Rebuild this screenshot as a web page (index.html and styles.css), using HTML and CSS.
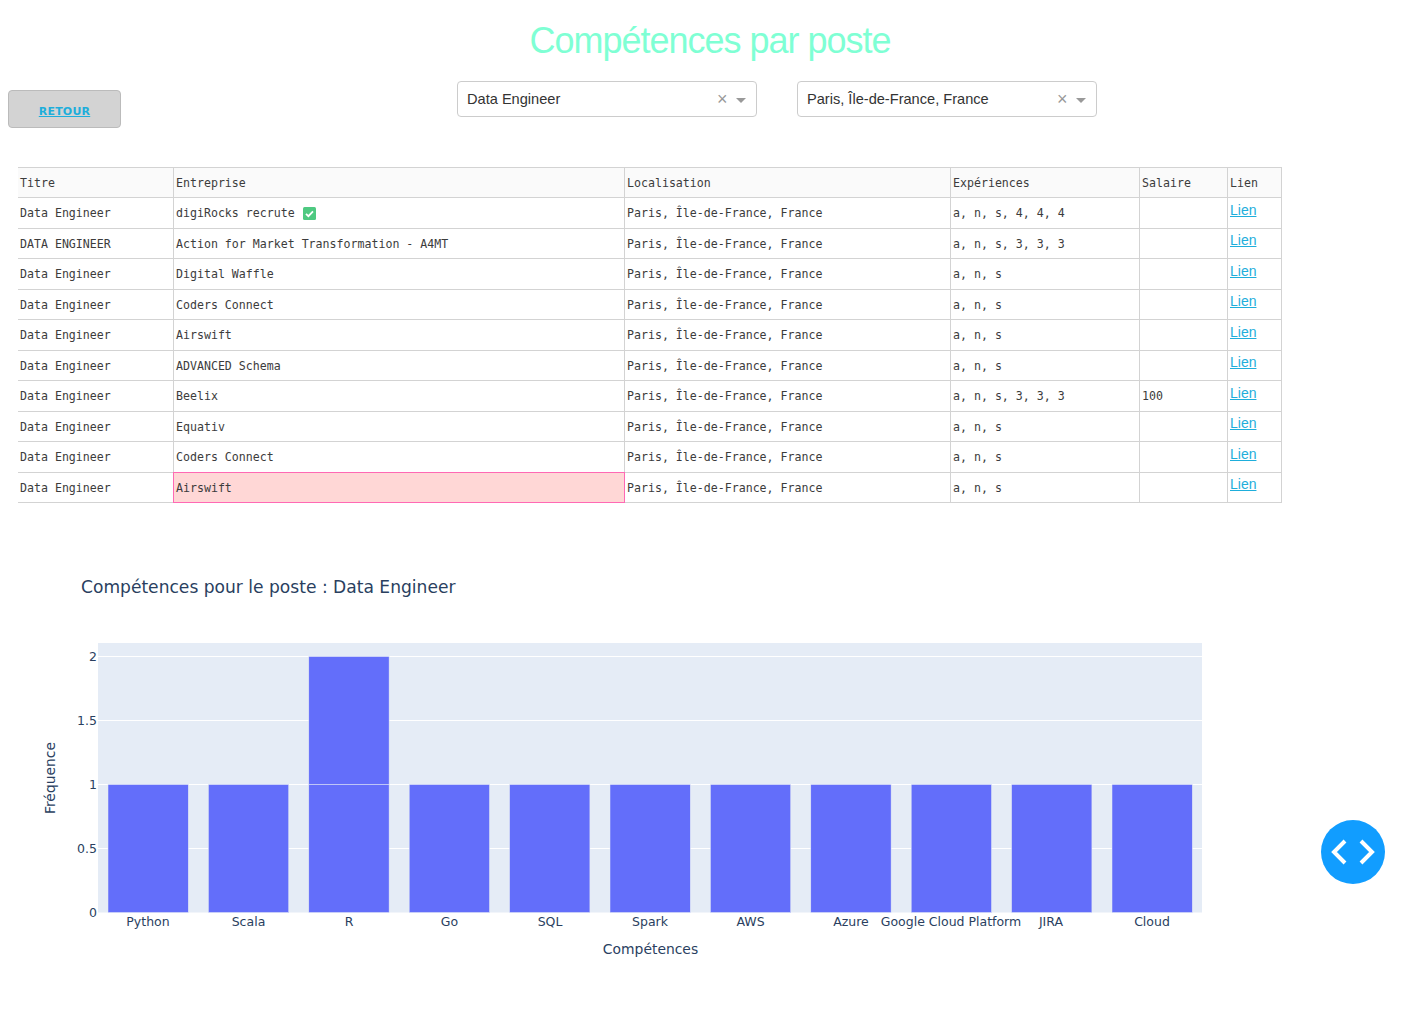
FILE: index.html
```html
<!DOCTYPE html>
<html lang="fr">
    <head>
        <meta charset="UTF-8">
        <title>Compétences par poste</title>
        <link rel="stylesheet" href="styles.css">
    </head>
    <body>
        <h1 class="page-title">Compétences par poste</h1>

        <div class="controls">
            <a class="back-button" href="#">RETOUR</a>
            <div class="select-box">
                <span class="select-value">Data Engineer</span>
                <span class="select-clear">×</span>
                <span class="select-arrow"></span>
            </div>
            <div class="select-box">
                <span class="select-value">Paris, Île-de-France, France</span>
                <span class="select-clear">×</span>
                <span class="select-arrow"></span>
            </div>
        </div>

        <table class="jobs-table">
            <colgroup>
                <col class="col-title">
                <col class="col-company">
                <col class="col-place">
                <col class="col-exp">
                <col class="col-salary">
                <col class="col-link">
            </colgroup>
            <thead>
                <tr><th>Titre</th><th>Entreprise</th><th>Localisation</th><th>Expériences</th><th>Salaire</th><th>Lien</th></tr>
            </thead>
            <tbody>
                <tr>
                    <td>Data Engineer</td>
                    <td>digiRocks recrute <svg class="check-icon" viewBox="0 0 13 13"><rect width="13" height="13" rx="1.5" fill="#4ec981"/><path d="M3 6.8l2.4 2.4L10 4.4" fill="none" stroke="#fff" stroke-width="1.8"/></svg></td>
                    <td>Paris, Île-de-France, France</td><td>a, n, s, 4, 4, 4</td><td></td><td><a href="#">Lien</a></td>
                </tr>
                <tr><td>DATA ENGINEER</td><td>Action for Market Transformation - A4MT</td><td>Paris, Île-de-France, France</td><td>a, n, s, 3, 3, 3</td><td></td><td><a href="#">Lien</a></td></tr>
                <tr><td>Data Engineer</td><td>Digital Waffle</td><td>Paris, Île-de-France, France</td><td>a, n, s</td><td></td><td><a href="#">Lien</a></td></tr>
                <tr><td>Data Engineer</td><td>Coders Connect</td><td>Paris, Île-de-France, France</td><td>a, n, s</td><td></td><td><a href="#">Lien</a></td></tr>
                <tr><td>Data Engineer</td><td>Airswift</td><td>Paris, Île-de-France, France</td><td>a, n, s</td><td></td><td><a href="#">Lien</a></td></tr>
                <tr><td>Data Engineer</td><td>ADVANCED Schema</td><td>Paris, Île-de-France, France</td><td>a, n, s</td><td></td><td><a href="#">Lien</a></td></tr>
                <tr><td>Data Engineer</td><td>Beelix</td><td>Paris, Île-de-France, France</td><td>a, n, s, 3, 3, 3</td><td>100</td><td><a href="#">Lien</a></td></tr>
                <tr><td>Data Engineer</td><td>Equativ</td><td>Paris, Île-de-France, France</td><td>a, n, s</td><td></td><td><a href="#">Lien</a></td></tr>
                <tr><td>Data Engineer</td><td>Coders Connect</td><td>Paris, Île-de-France, France</td><td>a, n, s</td><td></td><td><a href="#">Lien</a></td></tr>
                <tr><td>Data Engineer</td><td class="active-cell">Airswift</td><td>Paris, Île-de-France, France</td><td>a, n, s</td><td></td><td><a href="#">Lien</a></td></tr>
            </tbody>
        </table>

        <svg class="chart" viewBox="0 0 1300 450" width="1300" height="450">
            <text class="chart-title" x="81" y="43">Compétences pour le poste : Data Engineer</text>

            <rect class="plot-bg" x="98" y="93" width="1104" height="269.5"/>
            <g class="grid">
                <line x1="98" x2="1202" y1="106.5" y2="106.5"/>
                <line x1="98" x2="1202" y1="170.5" y2="170.5"/>
                <line x1="98" x2="1202" y1="234.5" y2="234.5"/>
                <line x1="98" x2="1202" y1="298.5" y2="298.5"/>
            </g>

            <g class="bars">
                <rect x="108" y="234.5" width="80.3" height="128"/>
                <rect x="208.4" y="234.5" width="80.3" height="128"/>
                <rect x="308.8" y="234.5" width="80.3" height="128"/>
                <rect x="308.8" y="106.5" width="80.3" height="128"/>
                <rect x="409.2" y="234.5" width="80.3" height="128"/>
                <rect x="509.6" y="234.5" width="80.3" height="128"/>
                <rect x="610" y="234.5" width="80.3" height="128"/>
                <rect x="710.4" y="234.5" width="80.3" height="128"/>
                <rect x="810.8" y="234.5" width="80.3" height="128"/>
                <rect x="911.2" y="234.5" width="80.3" height="128"/>
                <rect x="1011.6" y="234.5" width="80.3" height="128"/>
                <rect x="1112" y="234.5" width="80.3" height="128"/>
            </g>

            <g class="y-ticks">
                <text x="97" y="111">2</text>
                <text x="97" y="175">1.5</text>
                <text x="97" y="239">1</text>
                <text x="97" y="303">0.5</text>
                <text x="97" y="367">0</text>
            </g>
            <g class="x-ticks">
                <text x="148" y="376">Python</text>
                <text x="248.5" y="376">Scala</text>
                <text x="349" y="376">R</text>
                <text x="449.5" y="376">Go</text>
                <text x="550" y="376">SQL</text>
                <text x="650" y="376">Spark</text>
                <text x="750.5" y="376">AWS</text>
                <text x="851" y="376">Azure</text>
                <text x="951" y="376">Google Cloud Platform</text>
                <text x="1051" y="376">JIRA</text>
                <text x="1152" y="376">Cloud</text>
            </g>
            <text class="axis-title" x="650.5" y="404">Compétences</text>
            <text class="axis-title" transform="translate(55 228) rotate(-90)">Fréquence</text>
        </svg>

        <button class="debug-button" type="button">
            <svg viewBox="0 0 64 64" width="64" height="64"><path d="M24 21L13 32l11 11M40 21l11 11-11 11" fill="none" stroke="#fff" stroke-width="4"/></svg>
        </button>
    </body>
</html>
```

FILE: styles.css
```css
body {
    font-family: "Liberation Sans", Arial, sans-serif;
    background-color: white;
    margin: 0;
    padding: 0;
}

.page-title {
    margin: 0;
    padding-top: 20px;
    height: 61px;
    box-sizing: border-box;
    text-align: center;
    font-size: 36px;
    line-height: 41px;
    font-weight: normal;
    letter-spacing: -1px;
    color: #7fffd4;
}

.controls {
    display: flex;
    align-items: flex-start;
    padding: 20px 0 0 8px;
    height: 106px;
    box-sizing: border-box;
}

.back-button {
    width: 113px;
    height: 38px;
    margin-top: 9px;
    margin-right: 336px;
    box-sizing: border-box;
    padding-top: 14px;
    text-align: center;
    font-family: "DejaVu Sans", sans-serif;
    font-size: 11px;
    line-height: 14px;
    font-weight: bold;
    letter-spacing: 0.2px;
    color: #1eaedb;
    background-color: lightgrey;
    border: 1px solid #bbb;
    border-radius: 4px;
}

.select-box {
    width: 300px;
    height: 36px;
    margin-right: 40px;
    box-sizing: border-box;
    display: flex;
    align-items: center;
    padding: 0 10px 0 9px;
    border: 1px solid #ccc;
    border-radius: 4px;
    font-size: 14.6px;
    color: #333;
}

.select-value {
    flex: 1;
}

.select-clear {
    font-size: 18px;
    color: #999;
    margin-right: 8.5px;
}

.select-arrow {
    width: 0;
    height: 0;
    margin-top: 2px;
    border-top: 5px solid #999;
    border-left: 5px solid transparent;
    border-right: 5px solid transparent;
}

.jobs-table {
    margin-left: 18px;
    width: 1263px;
    table-layout: fixed;
    border-collapse: collapse;
    font-family: "DejaVu Sans Mono", monospace;
    font-size: 11.6px;
    color: #3c3c3c;
}

.col-title { width: 155px; }
.col-company { width: 451px; }
.col-place { width: 326px; }
.col-exp { width: 189px; }
.col-salary { width: 88px; }
.col-link { width: 54px; }

.jobs-table th,
.jobs-table td {
    height: 30.5px;
    padding: 2.6px 2px 2px 2.5px;
    box-sizing: border-box;
    border: 1px solid #d3d3d3;
    text-align: left;
    font-weight: normal;
    white-space: nowrap;
    overflow: hidden;
    vertical-align: middle;
}

.jobs-table tr > :first-child {
    border-left: none;
    padding-left: 2px;
}

.jobs-table th {
    height: 30px;
    background-color: #fafafa;
}

.jobs-table td a {
    display: block;
    margin-top: -6.5px;
    font-family: "Liberation Sans", Arial, sans-serif;
    font-size: 14px;
    color: #1eaedb;
}

/* double wins the collapsed border conflict with the neighbour cells */
.jobs-table td.active-cell {
    background-color: #ffd7d6;
    border: 1px double hotpink;
}

.check-icon {
    width: 13px;
    height: 13px;
    vertical-align: -3px;
    margin-left: 1px;
}

.chart {
    display: block;
    margin-top: 47px;
}

.chart text {
    font-family: "DejaVu Sans", sans-serif;
    fill: #2a3f5f;
}

.chart .chart-title {
    font-size: 17.1px;
}

.plot-bg {
    fill: #e5ecf6;
}

.grid line {
    stroke: white;
    stroke-width: 1;
}

.bars rect {
    fill: #636efa;
    stroke: #e5ecf6;
    stroke-width: 0.5;
}

.y-ticks text {
    font-size: 12.5px;
    text-anchor: end;
}

.x-ticks text {
    font-size: 12.5px;
    text-anchor: middle;
}

.chart .axis-title {
    font-size: 13.9px;
    text-anchor: middle;
}

.debug-button {
    position: absolute;
    left: 1321px;
    top: 820px;
    width: 64px;
    height: 64px;
    padding: 0;
    border: none;
    border-radius: 50%;
    background-color: #119dff;
}
```
